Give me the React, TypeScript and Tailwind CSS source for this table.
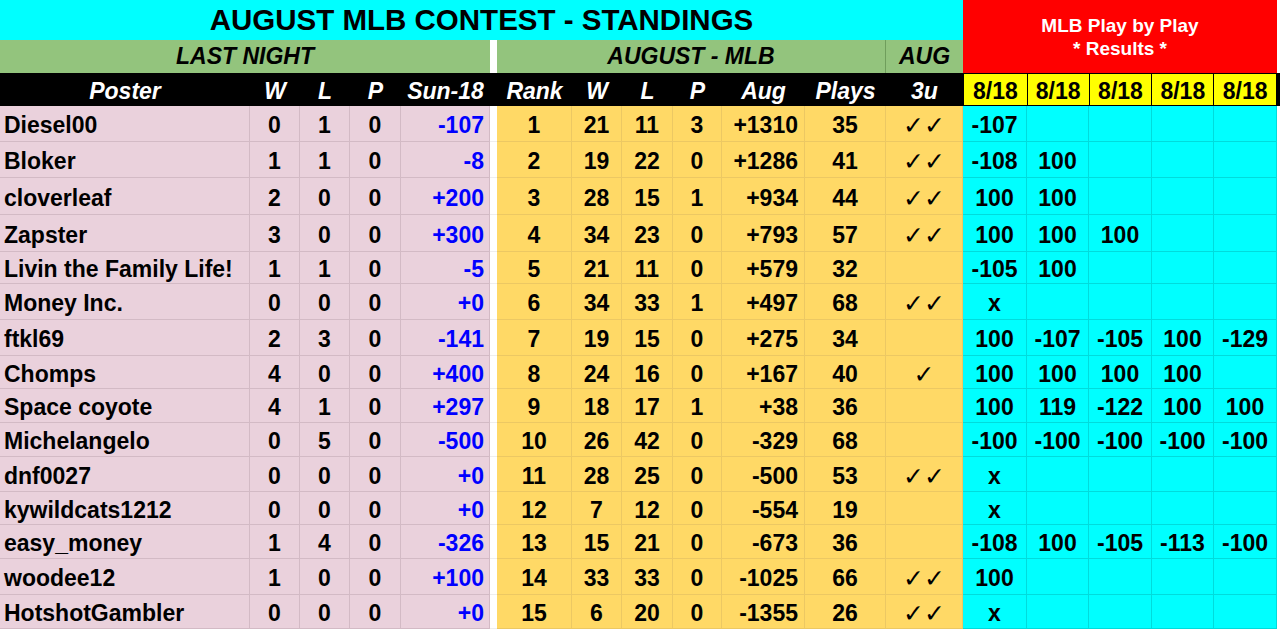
import React from 'react';

type Row = {
  name: string;
  w: number;
  l: number;
  p: number;
  sun: string;
  rank: number;
  aw: number;
  al: number;
  ap: number;
  aug: string;
  plays: number;
  u3: string;
  picks: string[];
  h: string;
};

const rows: Row[] = [
  { name: 'Diesel00', w: 0, l: 1, p: 0, sun: '-107', rank: 1, aw: 21, al: 11, ap: 3, aug: '+1310', plays: 35, u3: '✓✓', picks: ['-107'], h: 'h-[36px]' },
  { name: 'Bloker', w: 1, l: 1, p: 0, sun: '-8', rank: 2, aw: 19, al: 22, ap: 0, aug: '+1286', plays: 41, u3: '✓✓', picks: ['-108', '100'], h: 'h-[36px]' },
  { name: 'cloverleaf', w: 2, l: 0, p: 0, sun: '+200', rank: 3, aw: 28, al: 15, ap: 1, aug: '+934', plays: 44, u3: '✓✓', picks: ['100', '100'], h: 'h-[37px]' },
  { name: 'Zapster', w: 3, l: 0, p: 0, sun: '+300', rank: 4, aw: 34, al: 23, ap: 0, aug: '+793', plays: 57, u3: '✓✓', picks: ['100', '100', '100'], h: 'h-[37px]' },
  { name: 'Livin the Family Life!', w: 1, l: 1, p: 0, sun: '-5', rank: 5, aw: 21, al: 11, ap: 0, aug: '+579', plays: 32, u3: '', picks: ['-105', '100'], h: 'h-[32px]' },
  { name: 'Money Inc.', w: 0, l: 0, p: 0, sun: '+0', rank: 6, aw: 34, al: 33, ap: 1, aug: '+497', plays: 68, u3: '✓✓', picks: ['x'], h: 'h-[36px]' },
  { name: 'ftkl69', w: 2, l: 3, p: 0, sun: '-141', rank: 7, aw: 19, al: 15, ap: 0, aug: '+275', plays: 34, u3: '', picks: ['100', '-107', '-105', '100', '-129'], h: 'h-[36px]' },
  { name: 'Chomps', w: 4, l: 0, p: 0, sun: '+400', rank: 8, aw: 24, al: 16, ap: 0, aug: '+167', plays: 40, u3: '✓', picks: ['100', '100', '100', '100'], h: 'h-[33px]' },
  { name: 'Space coyote', w: 4, l: 1, p: 0, sun: '+297', rank: 9, aw: 18, al: 17, ap: 1, aug: '+38', plays: 36, u3: '', picks: ['100', '119', '-122', '100', '100'], h: 'h-[34px]' },
  { name: 'Michelangelo', w: 0, l: 5, p: 0, sun: '-500', rank: 10, aw: 26, al: 42, ap: 0, aug: '-329', plays: 68, u3: '', picks: ['-100', '-100', '-100', '-100', '-100'], h: 'h-[34px]' },
  { name: 'dnf0027', w: 0, l: 0, p: 0, sun: '+0', rank: 11, aw: 28, al: 25, ap: 0, aug: '-500', plays: 53, u3: '✓✓', picks: ['x'], h: 'h-[35px]' },
  { name: 'kywildcats1212', w: 0, l: 0, p: 0, sun: '+0', rank: 12, aw: 7, al: 12, ap: 0, aug: '-554', plays: 19, u3: '', picks: ['x'], h: 'h-[33px]' },
  { name: 'easy_money', w: 1, l: 4, p: 0, sun: '-326', rank: 13, aw: 15, al: 21, ap: 0, aug: '-673', plays: 36, u3: '', picks: ['-108', '100', '-105', '-113', '-100'], h: 'h-[34px]' },
  { name: 'woodee12', w: 1, l: 0, p: 0, sun: '+100', rank: 14, aw: 33, al: 33, ap: 0, aug: '-1025', plays: 66, u3: '✓✓', picks: ['100'], h: 'h-[36px]' },
  { name: 'HotshotGambler', w: 0, l: 0, p: 0, sun: '+0', rank: 15, aw: 6, al: 20, ap: 0, aug: '-1355', plays: 26, u3: '✓✓', picks: ['x'], h: 'h-[34px]' },
];

const pickW = ['w-[64px]', 'w-[62px]', 'w-[63px]', 'w-[62px]', 'w-[63px]'];

const pink = 'h-full flex items-center pt-[4px] bg-[#ead1dc] border-r border-b border-[#d3bac5]';
const gold = 'h-full flex items-center justify-center pt-[4px] bg-[#ffd966] border-r border-b border-[#ecc863]';
const cyan = 'h-full flex items-center justify-center pt-[4px] bg-[#00ffff] border-r border-b border-[#00dcdc]';
const head = 'h-full flex items-center justify-center pt-[3px] italic text-white';

function HeaderRow() {
  return (
    <div className="flex h-[33px]">
      <div className={`${head} w-[250px]`}>Poster</div>
      <div className={`${head} w-[50px]`}>W</div>
      <div className={`${head} w-[50px]`}>L</div>
      <div className={`${head} w-[51px]`}>P</div>
      <div className={`${head} w-[89px]`}>Sun-18</div>
      <div className={`${head} w-[7px]`} />
      <div className={`${head} w-[75px]`}>Rank</div>
      <div className={`${head} w-[50px]`}>W</div>
      <div className={`${head} w-[51px]`}>L</div>
      <div className={`${head} w-[49px]`}>P</div>
      <div className={`${head} w-[83px]`}>Aug</div>
      <div className={`${head} w-[81px]`}>Plays</div>
      <div className={`${head} w-[77px]`}>3u</div>
      <div className="flex h-full w-[314px] border-t border-l border-black bg-black">
        {pickW.map((w, i) => (
          <div key={i} className={`${w} flex h-full items-center justify-center border-r border-b border-black bg-[#ffff00] pt-[3px] text-black`}>
            8/18
          </div>
        ))}
      </div>
    </div>
  );
}

function DataRow({ r }: { r: Row }) {
  return (
    <div className={`flex ${r.h}`}>
      <div className={`${pink} w-[250px] pl-[4px]`}>{r.name}</div>
      <div className={`${pink} w-[50px] justify-center`}>{r.w}</div>
      <div className={`${pink} w-[50px] justify-center`}>{r.l}</div>
      <div className={`${pink} w-[51px] justify-center`}>{r.p}</div>
      <div className={`${pink} w-[89px] justify-end pr-[5px] text-[#0000ff]`}>{r.sun}</div>
      <div className="h-full w-[7px] border-b border-[#eeeeee] bg-white" />
      <div className={`${gold} w-[75px] bg-[#f1c232]`}>{r.rank}</div>
      <div className={`${gold} w-[50px]`}>{r.aw}</div>
      <div className={`${gold} w-[51px]`}>{r.al}</div>
      <div className={`${gold} w-[49px]`}>{r.ap}</div>
      <div className={`${gold} w-[83px] justify-end pr-[6px]`}>{r.aug}</div>
      <div className={`${gold} w-[81px]`}>{r.plays}</div>
      <div className={`${gold} w-[77px] font-['DejaVu_Sans',sans-serif] text-[25px] font-normal`}>{r.u3}</div>
      {pickW.map((w, i) => (
        <div key={i} className={`${cyan} ${w}`}>
          {r.picks[i] ?? ''}
        </div>
      ))}
    </div>
  );
}

export default function App() {
  return (
    <div className="h-[631px] w-[1280px] overflow-hidden bg-white font-['Liberation_Sans',Arial,sans-serif] text-[23px] font-bold leading-none text-black">
      <div className="flex h-[73px]">
        <div className="flex w-[963px] flex-col">
          <div className="flex h-[40px] items-center justify-center bg-[#00ffff] text-[29.5px]">
            AUGUST MLB CONTEST - STANDINGS
          </div>
          <div className="flex h-[33px] italic">
            <div className="flex w-[490px] items-center justify-center bg-[#93c47d]">LAST NIGHT</div>
            <div className="w-[7px] bg-white" />
            <div className="flex w-[389px] items-center justify-center border-r border-[#6f9e5c] bg-[#93c47d]">AUGUST - MLB</div>
            <div className="flex w-[77px] items-center justify-center bg-[#93c47d]">AUG</div>
          </div>
        </div>
        <div className="flex w-[314px] flex-col items-center justify-center gap-[4px] bg-[#ff0000] text-[19px] text-white">
          <div>MLB Play by Play</div>
          <div>* Results *</div>
        </div>
      </div>
      <div className="bg-black">
        <HeaderRow />
      </div>
      {rows.map((r) => (
        <DataRow key={r.name} r={r} />
      ))}
    </div>
  );
}
